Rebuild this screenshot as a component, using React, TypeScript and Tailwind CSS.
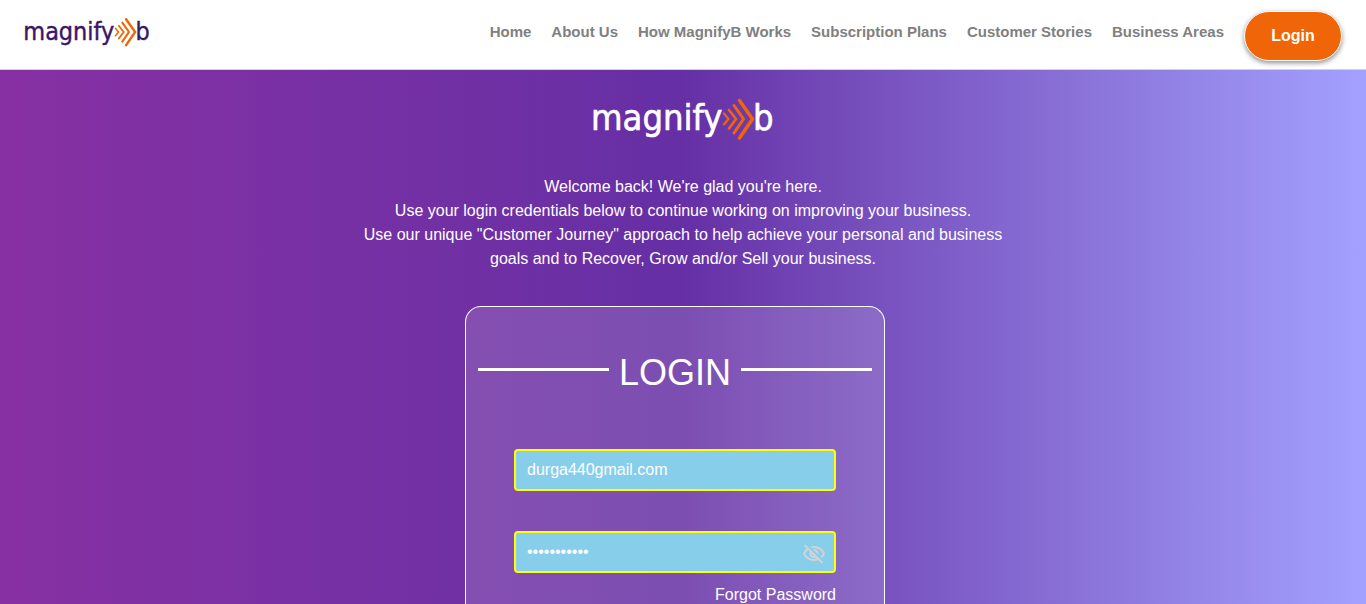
import React, { useState } from "react";

const navItems = [
  "Home",
  "About Us",
  "How MagnifyB Works",
  "Subscription Plans",
  "Customer Stories",
  "Business Areas",
];

function Logo({ className }: { className: string }) {
  return (
    <svg viewBox="0 0 182 42" className={className} overflow="visible" role="img" aria-label="magnifyb">
      <g
        fill="currentColor"
        stroke="currentColor"
        strokeWidth="0.6"
        fontSize="36"
        className="font-['DejaVu_Sans_Condensed','DejaVu_Sans',sans-serif]"
      >
        <text x="-1" y="32">magnify</text>
        <text x="161" y="32">b</text>
      </g>
      <g fill="none" stroke="#f06507" strokeLinecap="round">
        <path d="M132 15.500L136.500 21L132 26.500" strokeWidth="2.200" />
        <path d="M137 12L144 21L137 30.500" strokeWidth="2.600" />
        <path d="M142 7.500L151.500 21L142 35" strokeWidth="3" />
        <path d="M147.500 2.500L160.500 21L147.500 40" strokeWidth="3.500" />
      </g>
    </svg>
  );
}

export default function App() {
  const [email, setEmail] = useState("durga440gmail.com");
  const [password, setPassword] = useState("password123");
  const [visible, setVisible] = useState(false);

  return (
    <div className="flex min-h-screen flex-col font-['Liberation_Sans',Arial,sans-serif]">
      <header className="flex h-[70px] items-start justify-between border-b border-[#d3d3d3] bg-white px-6 pt-[11px]">
        <a href="#home" className="pt-1.5 text-[#3b1768]">
          <Logo className="h-[30px] w-[126px]" />
        </a>
        <nav className="flex items-start gap-5 text-[15px] leading-5 font-bold text-[#808080]">
          {navItems.map((item) => (
            <a key={item} href="#" className="pt-[11px]">
              {item}
            </a>
          ))}
          <button
            type="button"
            className="h-[50px] w-[98px] rounded-full border border-white bg-[#f06507] text-base font-bold text-white shadow-[0_2px_5px_rgba(0,0,0,0.45)]"
          >
            Login
          </button>
        </nav>
      </header>

      <main className="flex flex-1 flex-col items-center bg-linear-to-r from-[#8730a3] via-[#662fa5] to-[#a3a1ff] pt-7 text-white">
        <Logo className="h-[42px] w-[182px]" />
        <p className="mt-[35px] max-w-[683px] px-4 text-center text-base leading-6">
          Welcome back! We're glad you're here.
          <br />
          Use your login credentials below to continue working on improving your business.
          <br />
          Use our unique "Customer Journey" approach to help achieve your personal and business
          goals and to Recover, Grow and/or Sell your business.
        </p>

        <form
          className="mt-[35px] mr-4 w-full max-w-[420px] flex-1 rounded-t-2xl border border-b-0 border-white bg-white/15 px-3 pt-10"
          onSubmit={(e) => e.preventDefault()}
        >
          <div className="flex items-center gap-2.5">
            <span className="mb-2 h-[3px] flex-1 bg-white" />
            <h1 className="text-4xl leading-[52px]">LOGIN</h1>
            <span className="mb-2 h-[3px] flex-1 bg-white" />
          </div>
          <div className="px-9 pt-[50px]">
            <input
              type="text"
              aria-label="Email"
              value={email}
              onChange={(e) => setEmail(e.target.value)}
              className="block h-[42px] w-full rounded-sm border-2 border-[#ffff00] bg-[#87ceeb] px-[11px] text-base text-white outline-none"
            />
            <div className="relative mt-10">
              <input
                type={visible ? "text" : "password"}
                aria-label="Password"
                autoFocus
                value={password}
                onChange={(e) => setPassword(e.target.value)}
                className="block h-[42px] w-full rounded-sm border-2 border-[#ffff00] bg-[#87ceeb] px-[11px] pr-10 text-base text-white outline-none"
              />
              <button
                type="button"
                aria-label="Show password"
                onClick={() => setVisible(!visible)}
                className="absolute top-[11px] right-2.5 text-[#d3d3d3]"
              >
                <svg viewBox="0 0 24 24" className="size-6" fill="currentColor" aria-hidden="true">
                  <path d="M12 6c3.790 0 7.170 2.130 8.820 5.500-.590 1.220-1.420 2.270-2.410 3.120l1.410 1.410c1.390-1.230 2.490-2.770 3.180-4.530C21.270 7.110 17 4 12 4c-1.270 0-2.490.200-3.640.570l1.650 1.650C10.660 6.090 11.320 6 12 6zm-1.070 1.140L13 9.210c.570.250 1.030.710 1.280 1.280l2.070 2.070c.080-.340.140-.700.140-1.070C16.500 9.010 14.480 7 12 7c-.370 0-.720.050-1.070.140zM2.010 3.870l2.680 2.680C3.060 7.830 1.770 9.530 1 11.500 2.730 15.890 7 19 12 19c1.520 0 2.980-.290 4.320-.820l3.420 3.420 1.410-1.410L3.420 2.450 2.010 3.870zm7.500 7.500l2.610 2.610c-.040.010-.080.020-.120.020-1.380 0-2.500-1.120-2.500-2.500 0-.050.010-.080.010-.130zm-3.400-3.400l1.750 1.750c-.230.550-.360 1.150-.360 1.780 0 2.480 2.020 4.500 4.500 4.500.630 0 1.230-.130 1.770-.360l.980.980c-.880.240-1.800.380-2.750.380-3.790 0-7.170-2.130-8.820-5.500.700-1.430 1.720-2.610 2.930-3.530z" />
                </svg>
              </button>
            </div>
            <div className="pt-2.5 text-right text-base">
              <a href="#forgot">Forgot Password</a>
            </div>
          </div>
        </form>
      </main>
    </div>
  );
}
